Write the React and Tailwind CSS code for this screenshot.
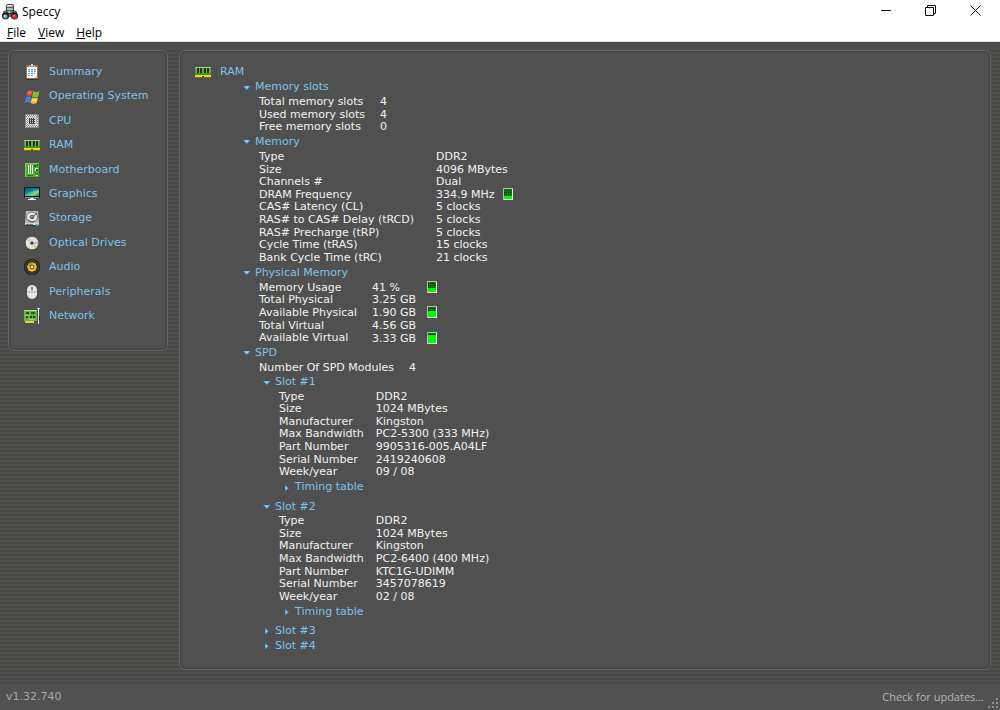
import React from "react";

/* ---------- Icons ---------- */

function AppIcon() {
  return (
    <svg width="16" height="16" viewBox="0 0 16 16" aria-hidden="true">
      <rect x="4.500" y=".5" width="7" height="9" rx="1" fill="#b9bcbc" stroke="#3d4040" />
      <path d="M5 3.500h6M5 6.500h6" stroke="#5b5f5f" />
      <rect x="5" y="1" width="4" height="1" fill="#f3f5f5" />
      <rect x="8" y="7" width="3" height="2" fill="#35c23b" />
      <path d="M1.500 7.500L4.500 6l2 3h3l2-3 3 1.500 1.500 4H0z" fill="#2b2e30" />
      <path d="M2.500 8.500l2-1M11.500 7.500l2 1" stroke="#a9acae" />
      <path d="M5.500 10h5v3h-5z" fill="#6a6c6e" />
      <circle cx="3.500" cy="12" r="3.500" fill="#1d2022" />
      <circle cx="3.300" cy="12.500" r="2.300" fill="#6f93c2" />
      <circle cx="2.800" cy="12" r="1" fill="#d4e4f5" />
      <circle cx="12.500" cy="12" r="3.500" fill="#1d2022" />
      <circle cx="12.500" cy="12.500" r="2.500" fill="#dc2430" />
      <circle cx="12" cy="11.800" r="0.900" fill="#ff8e92" />
    </svg>
  );
}

function SummaryIcon() {
  return (
    <svg width="16" height="16" viewBox="0 0 16 16" aria-hidden="true">
      <rect x="2" y="1" width="12" height="14" rx="1" fill="#b4662e" />
      <path d="M3 3h10v11h-10z" fill="#f6fafc" />
      <path d="M10 14l3-3v3z" fill="#ccd5db" />
      <rect x="5" y="1" width="6" height="2" fill="#969b9e" />
      <rect x="7" y="0" width="2" height="2" fill="#c3c8cb" />
      <path d="M4 5.500h8M4 7.500h8M4 9.500h7M4 11.500h5" stroke="#3ba7dd" strokeDasharray="2 1" />
      <path d="M2 15.500h12" stroke="#2f2f2f" />
    </svg>
  );
}

function WindowsIcon() {
  return (
    <svg width="16" height="16" viewBox="0 0 16 16" aria-hidden="true">
      <path d="M3.500 2C5 .8 7 .9 8.700 1.900L7.400 7.300C5.800 6.400 4 6.300 2.200 7.400z" fill="#e44a2c" />
      <path d="M9.300 2.300C11.300 3.400 13.400 3.300 15.500 2.200L14.200 7.700C12.200 8.800 10 8.700 8 7.700z" fill="#7bc032" />
      <path d="M2 8.200C3.700 7.200 5.500 7.300 7.200 8.100L5.900 13.700C4.200 12.800 2.400 12.800.500 13.800z" fill="#3d83da" />
      <path d="M7.900 8.500C9.800 9.500 11.900 9.600 14 8.500L12.700 14.100C10.600 15.200 8.500 15.100 6.500 14.100z" fill="#f6c62c" />
      <path d="M4 3c1.200-.7 2.500-.8 3.800-.2l-.6 2c-1.200-.4-2.500-.4-3.700.1z" fill="#ff9b7e" opacity=".6" />
      <path d="M9 9.800c1.300.5 2.600.6 3.900.2l-.5 1.500c-1.300.4-2.600.4-3.900 0z" fill="#fff3a3" opacity=".7" />
    </svg>
  );
}

function CpuIcon() {
  return (
    <svg width="16" height="16" viewBox="0 0 16 16" aria-hidden="true">
      <path d="M1 1h13l1 1v13h-14z" fill="#8b8b8b" />
      <path d="M2 2.500h12M2 4.500h12M2 11.500h12M2 13.500h12" stroke="#eeeeee" strokeDasharray="1 1" />
      <path d="M3 3.500h10M3 12.500h11" stroke="#e2e2e2" strokeDasharray="1 1" />
      <path d="M2.500 5v7M13.500 5v7" stroke="#eeeeee" strokeDasharray="1 1" />
      <path d="M3.500 4v8M12.500 4v8" stroke="#d8d8d8" strokeDasharray="1 1" />
      <rect x="4" y="4" width="8" height="8" fill="#cfcfcf" />
      <path d="M5 5.500h6M5 7.500h6M5 9.500h6" stroke="#343434" strokeDasharray="1 1" />
      <path d="M5 6.500h6M5 8.500h6M5 10.500h6" stroke="#4a4a4a" />
    </svg>
  );
}

function RamIcon() {
  return (
    <svg width="16" height="16" viewBox="0 0 16 16" aria-hidden="true">
      <rect x="0" y="3" width="16" height="8" fill="#5b9c35" />
      <path d="M0 3.500h16" stroke="#a8cf83" />
      <path d="M2 4h2v5H2zM5 4h2v5H5zM9 4h2v5H9zM12 4h2v5h-2z" fill="#25351f" />
      <path d="M1.500 4v6M4.500 4v6M8 4v6M11.500 4v6M14.500 4v6" stroke="#85a965" />
      <rect x="0" y="9" width="16" height="2" fill="#2f9a2c" />
      <rect x="0" y="11" width="16" height="2" fill="#f8d80e" />
      <rect x="0" y="13" width="16" height="1" fill="#7a6a1f" />
      <rect x="7" y="12" width="2" height="1" fill="#373a2a" />
    </svg>
  );
}

function MotherboardIcon() {
  return (
    <svg width="16" height="16" viewBox="0 0 16 16" aria-hidden="true">
      <rect x="1" y="1" width="14" height="14" fill="#4cab2a" />
      <path d="M1 1.500h14M1.500 1v14" stroke="#8bd15c" />
      <path d="M4.500 3v9M6.500 2v10M8.500 3v9" stroke="#f0f6ea" />
      <rect x="10" y="3" width="2" height="2" fill="#1d6b24" />
      <rect x="11" y="6" width="3" height="3" fill="#d8e5d0" />
      <rect x="12" y="7" width="2" height="2" fill="#275c22" />
      <path d="M3 13.500h6M11 11.500h3" stroke="#1f7d20" />
      <rect x="11" y="13" width="3" height="1" fill="#a7ec63" />
      <rect x="13" y="2" width="1" height="2" fill="#1a551e" />
    </svg>
  );
}

function GraphicsIcon() {
  return (
    <svg width="16" height="16" viewBox="0 0 16 16" aria-hidden="true">
      <defs>
        <linearGradient id="screen" x1="0" y1="0" x2="1" y2="1">
          <stop offset="0" stopColor="#086d97" />
          <stop offset=".45" stopColor="#18b2b4" />
          <stop offset=".7" stopColor="#9ad36b" />
          <stop offset="1" stopColor="#127782" />
        </linearGradient>
      </defs>
      <rect x="0" y="1" width="16" height="11" rx="1" fill="#101415" />
      <rect x="1" y="2" width="14" height="8" fill="url(#screen)" />
      <path d="M1 2h14v2c-5 0-9 1-14 4z" fill="#07516c" opacity=".5" />
      <path d="M1 11.500h14" stroke="#8d9191" />
      <rect x="6" y="12" width="4" height="2" fill="#dcdedf" />
      <rect x="4" y="13" width="8" height="1" fill="#eceeee" />
    </svg>
  );
}

function StorageIcon() {
  return (
    <svg width="16" height="16" viewBox="0 0 16 16" aria-hidden="true">
      <path d="M2 0h12l1 12H1z" fill="#b9b9b9" />
      <path d="M1 12h14v2H1z" fill="#d9d9d9" />
      <path d="M1 14.500h14" stroke="#343434" />
      <ellipse cx="8" cy="6" rx="5.500" ry="5" fill="#ececec" stroke="#777" />
      <ellipse cx="8" cy="6" rx="2" ry="1.800" fill="#a0a0a0" stroke="#5d5d5d" />
      <path d="M13 2L8.500 6l-1 1M4 9l4 2 3-1" stroke="#4e4e4e" fill="none" />
      <rect x="12" y="13" width="2" height="2" fill="#21b9e8" />
      <path d="M2 13.500h7" stroke="#777" />
    </svg>
  );
}

function OpticalIcon() {
  return (
    <svg width="16" height="16" viewBox="0 0 16 16" aria-hidden="true">
      <circle cx="8" cy="8" r="6.300" fill="#e4e4e2" />
      <path d="M8 8L2.500 5A6.300 6.300 0 0 1 6 2z" fill="#f0c4dc" />
      <path d="M8 8l5.500 3.500a6.300 6.300 0 0 1-2.500 2z" fill="#b6e66a" />
      <path d="M8 8l-6 2a6.300 6.300 0 0 0 1.500 2.500z" fill="#f1e59b" />
      <path d="M8 8l6-1.500a6.300 6.300 0 0 1 0 3z" fill="#ed9bc9" />
      <circle cx="8" cy="8" r="2.600" fill="#c9c9c9" />
      <circle cx="8" cy="8" r="1.600" fill="#393939" />
    </svg>
  );
}

function AudioIcon() {
  return (
    <svg width="16" height="16" viewBox="0 0 16 16" aria-hidden="true">
      <circle cx="8" cy="8" r="8" fill="#171716" />
      <circle cx="8" cy="8" r="6.400" fill="none" stroke="#5e5e5a" />
      <circle cx="8" cy="8" r="4.800" fill="#e8b81c" />
      <path d="M3.800 6a4.700 4.700 0 0 1 5-2.700L8 8z" fill="#b98c10" />
      <circle cx="8" cy="8" r="2.200" fill="#3c3520" />
      <circle cx="8" cy="8" r="1.500" fill="#dfe1e4" />
    </svg>
  );
}

function MouseIcon() {
  return (
    <svg width="16" height="16" viewBox="0 0 16 16" aria-hidden="true">
      <rect x="3" y="1" width="10" height="14" rx="5" fill="#e7e7e7" />
      <path d="M4 11a4.200 4.200 0 0 0 8 0v1a4.500 4.500 0 0 1-8 0z" fill="#b4b4b4" />
      <path d="M3 7.500c3 1 7 1 10 0M8 1v6" stroke="#a8a8a8" fill="none" />
      <rect x="7" y="3" width="2" height="3" rx="1" fill="#7d7d7d" />
    </svg>
  );
}

function NetworkIcon() {
  return (
    <svg width="16" height="16" viewBox="0 0 16 16" aria-hidden="true">
      <rect x="0" y="2" width="13" height="11" fill="#69b341" />
      <path d="M0 2.500h13" stroke="#b4dc90" />
      <rect x="2" y="4" width="3" height="2" fill="#234d1a" />
      <rect x="7" y="4" width="4" height="2" fill="#2c5d20" />
      <rect x="2" y="8" width="2" height="2" fill="#214b1a" />
      <rect x="6" y="8" width="2" height="2" fill="#1f4718" />
      <rect x="9" y="8" width="2" height="2" fill="#1f4718" />
      <path d="M1 7.500h4M5 11.500h6" stroke="#a3d178" />
      <rect x="1" y="13" width="9" height="2" fill="#eed032" />
      <path d="M13 .500h3M14.500 0v16" stroke="#e1e3e4" fill="none" />
      <path d="M15.500 8v4" stroke="#262626" />
    </svg>
  );
}

/* ---------- Data ---------- */

const NAV = [
  ["Summary", SummaryIcon],
  ["Operating System", WindowsIcon],
  ["CPU", CpuIcon],
  ["RAM", RamIcon],
  ["Motherboard", MotherboardIcon],
  ["Graphics", GraphicsIcon],
  ["Storage", StorageIcon],
  ["Optical Drives", OpticalIcon],
  ["Audio", AudioIcon],
  ["Peripherals", MouseIcon],
  ["Network", NetworkIcon],
];

const SLOTS = [
  ["Total memory slots", "4"],
  ["Used memory slots", "4"],
  ["Free memory slots", "0"],
];

const MEMORY = [
  ["Type", "DDR2"],
  ["Size", "4096 MBytes"],
  ["Channels #", "Dual"],
  ["DRAM Frequency", "334.9 MHz", 3],
  ["CAS# Latency (CL)", "5 clocks"],
  ["RAS# to CAS# Delay (tRCD)", "5 clocks"],
  ["RAS# Precharge (tRP)", "5 clocks"],
  ["Cycle Time (tRAS)", "15 clocks"],
  ["Bank Cycle Time (tRC)", "21 clocks"],
];

const PHYSICAL = [
  ["Memory Usage", "41 %", 4],
  ["Total Physical", "3.25 GB"],
  ["Available Physical", "1.90 GB", 6],
  ["Total Virtual", "4.56 GB"],
  ["Available Virtual", "3.33 GB", 8],
];

const SLOT1 = [
  ["Type", "DDR2"],
  ["Size", "1024 MBytes"],
  ["Manufacturer", "Kingston"],
  ["Max Bandwidth", "PC2-5300 (333 MHz)"],
  ["Part Number", "9905316-005.A04LF"],
  ["Serial Number", "2419240608"],
  ["Week/year", "09 / 08"],
];

const SLOT2 = [
  ["Type", "DDR2"],
  ["Size", "1024 MBytes"],
  ["Manufacturer", "Kingston"],
  ["Max Bandwidth", "PC2-6400 (400 MHz)"],
  ["Part Number", "KTC1G-UDIMM"],
  ["Serial Number", "3457078619"],
  ["Week/year", "02 / 08"],
];

/* ---------- Parts ---------- */

function Gauge({ level }) {
  return (
    <svg
      className="-mt-px"
      width="10"
      height="12"
      viewBox="0 0 10 12"
      aria-hidden="true"
      shapeRendering="crispEdges"
    >
      <rect width="10" height="12" fill="#e9e9e9" />
      <path d="M0 0h10v1H1v11H0z" fill="#b5b5b5" />
      <rect x="1" y="1" width="8" height="10" fill="#0b7a10" />
      <path d="M1 2.500h8M1 4.500h8M1 6.500h8" stroke="#043c07" strokeDasharray="1 1" />
      <rect x="1" y={11 - level} width="8" height={level} fill="#00f800" />
    </svg>
  );
}

function Toggle({ open = false, className = "h-[17px]", children }) {
  return (
    <button
      type="button"
      aria-expanded={open}
      className={"flex items-center gap-1 text-[#7cc3ee] " + className}
    >
      <svg width="8" height="8" viewBox="0 0 8 8" aria-hidden="true">
        {open ? (
          <path d="M0 2h7.500L3.750 6z" fill="#3fa4ee" />
        ) : (
          <path d="M2 1v6.500l3.800-3.200z" fill="#3fa4ee" />
        )}
        {open ? (
          <path d="M1.500 2.600h4.500L3.700 4.700z" fill="#a5dbff" />
        ) : (
          <path d="M2.700 2.800v3l1.800-1.500z" fill="#a5dbff" />
        )}
      </svg>
      {children}
    </button>
  );
}

function Rows({ rows, labelWidth = "" }) {
  return (
    <table className="ml-4 border-collapse whitespace-nowrap leading-[1.15] text-[#f2f2f2]">
      <tbody>
        {rows.map(([label, value, level]) => (
          <tr key={label}>
            <th scope="row" className={"p-0 pr-3 text-left font-normal " + labelWidth}>
              {label}
            </th>
            <td className="p-0">
              {level ? (
                <div className="flex items-start gap-2">
                  <span className="-mb-px min-w-[47px]">{value}</span>
                  <Gauge level={level} />
                </div>
              ) : (
                value
              )}
            </td>
          </tr>
        ))}
      </tbody>
    </table>
  );
}

const PANEL =
  "rounded-md border border-[#656565] bg-[#505050] shadow-[inset_0_0_3px_rgba(0,0,0,0.4)]";

export default function App() {
  return (
    <div className="flex min-h-screen flex-col bg-[#505050] font-['DejaVu_Sans','Liberation_Sans',sans-serif] text-[11px]">
      <header className="border-b border-[#e6e6e6] bg-white font-['Open_Sans','Noto_Sans',sans-serif] text-[12px] text-black">
        <div className="flex h-6 items-center justify-between pl-[2px] pr-[19px]">
          <h1 className="flex items-center gap-1">
            <AppIcon />
            Speccy
          </h1>
          <div className="flex gap-[34px] pb-1">
            <button type="button" aria-label="Minimize">
              <svg width="11" height="11" viewBox="0 0 11 11">
                <path d="M1 5.500h10" stroke="#111" />
              </svg>
            </button>
            <button type="button" aria-label="Restore">
              <svg width="11" height="11" viewBox="0 0 11 11" fill="none" stroke="#111">
                <path d="M.500 2.500h8v8h-8zM2.500 2.500v-2h8v8h-2" />
              </svg>
            </button>
            <button type="button" aria-label="Close">
              <svg width="11" height="11" viewBox="0 0 11 11" stroke="#111">
                <path d="M.500.500l10 10M10.500.500l-10 10" />
              </svg>
            </button>
          </div>
        </div>
        <nav className="flex h-[17px] items-center gap-3 pl-[7px]">
          <button type="button"><u>F</u>ile</button>
          <button type="button"><u>V</u>iew</button>
          <button type="button"><u>H</u>elp</button>
        </nav>
      </header>

      <div className="flex flex-1 items-start gap-[11px] bg-[repeating-linear-gradient(to_bottom,#494947_0px,#494947_2px,#4f4f4d_2px,#4f4f4d_4px)] pt-2 pr-[9px] pb-[15px] pl-2">
        <nav className={"w-40 shrink-0 pt-[9px] pr-2 pb-[22px] pl-[15px] " + PANEL}>
          <ul className="leading-[2.22]">
            {NAV.map(([label, Icon]) => (
              <li key={label}>
                <a href={"#" + label} className="flex items-center gap-[9px] text-[#7cc3ee]">
                  <Icon />
                  {label}
                </a>
              </li>
            ))}
          </ul>
        </nav>

        <main className={"min-w-0 flex-1 self-stretch px-[15px] pt-[14px] pb-1 " + PANEL}>
          <h2 className="flex h-[14px] items-center gap-[9px] text-[#7cc3ee]">
            <RamIcon />
            RAM
          </h2>
          <div className="pl-12">
            <Toggle open>Memory slots</Toggle>
            <Rows rows={SLOTS} labelWidth="min-w-[121px]" />
            <Toggle open>Memory</Toggle>
            <Rows rows={MEMORY} labelWidth="min-w-[177px]" />
            <Toggle open>Physical Memory</Toggle>
            <Rows rows={PHYSICAL} labelWidth="min-w-[113px]" />
            <Toggle open>SPD</Toggle>
            <Rows rows={[["Number Of SPD Modules", "4"]]} labelWidth="min-w-[150px]" />
            <div className="pl-5">
              <Toggle open className="h-4">Slot #1</Toggle>
              <Rows rows={SLOT1} />
              <div className="pb-[3px] pl-5">
                <Toggle>Timing table</Toggle>
              </div>
              <Toggle open className="h-4">Slot #2</Toggle>
              <Rows rows={SLOT2} />
              <div className="pb-[3px] pl-5">
                <Toggle>Timing table</Toggle>
              </div>
              <Toggle className="h-[15px]">Slot #3</Toggle>
              <Toggle className="h-[15px]">Slot #4</Toggle>
            </div>
          </div>
        </main>
      </div>

      <footer className="relative flex h-[25px] items-center justify-between bg-[#515151] pr-4 pl-[6px] text-[#a8a8a8]">
        <span>v1.32.740</span>
        <a href="#updates" className="font-['Open_Sans','Noto_Sans',sans-serif] text-[11px] text-[#b4b4b4]">
          Check for updates...
        </a>
        <svg className="absolute right-0 bottom-0" width="12" height="12" viewBox="0 0 12 12" aria-hidden="true">
          <path
            d="M8 0h2v2h-2zM4 4h2v2h-2zM8 4h2v2h-2zM0 8h2v2h-2zM4 8h2v2h-2zM8 8h2v2h-2z"
            fill="#8d8d8d"
          />
        </svg>
      </footer>
    </div>
  );
}
